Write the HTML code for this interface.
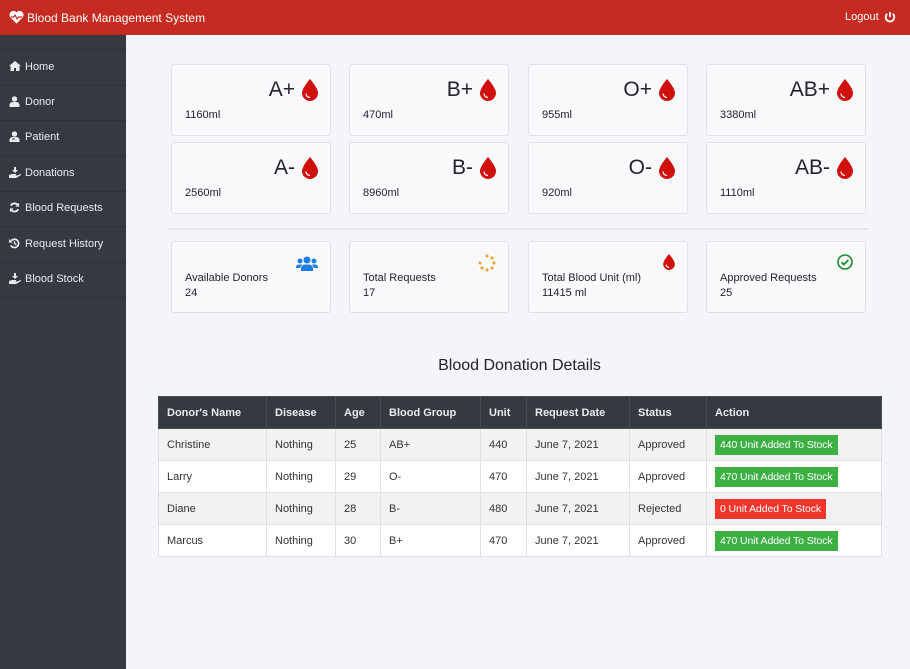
<!DOCTYPE html>
<html><head><style>
*{box-sizing:border-box;margin:0;padding:0}
body{width:910px;height:669px;overflow:hidden;background:#f4f5f8;font-family:"Liberation Sans",Arial,sans-serif;font-size:12px;color:#212529;position:relative}
.hdr{position:absolute;left:0;top:0;width:910px;height:35px;background:#c62b22;color:#fff}
.hdr .t{position:absolute;left:27px;top:11px;font-size:12px}
.hdr .lo{position:absolute;left:845px;top:11px;font-size:11px}
.side{position:absolute;left:0;top:35px;width:126px;height:634px;background:#343a40}
.side .sep{position:absolute;left:0;width:126px;height:1px;background:#2d3237}
.side .it{position:absolute;left:25px;color:#e9ecef;font-size:11px}
.side svg{position:absolute;left:9px}
.card{position:absolute;width:160px;height:72px;background:#f8f9fa;border:1px solid #dfe1e4;border-radius:3px}
.card .g{position:absolute;right:35px;top:13px;font-size:21px;color:#212529}
.card .drop{position:absolute;right:12px;top:14px}
.card .v{position:absolute;left:13px;top:44px;font-size:11px}
.card .l{position:absolute;left:13px;top:29px;font-size:11px;line-height:15px}
.card .ic{position:absolute;right:12px;top:12px}
.hr{position:absolute;left:167px;top:228px;width:702px;height:2px;background:#e6e7ea}
h3{position:absolute;left:158px;width:723px;top:357px;text-align:center;font-weight:normal;font-size:16px;color:#212529}
table{position:absolute;left:158px;top:396px;width:724px;border-collapse:collapse;font-size:11px}
th{background:#343a40;color:#e9ecef;text-align:left;height:32px;padding-left:8px;font-weight:bold;border:1px solid #454d55}
td{height:32px;padding-left:8px;border:1px solid #dee2e6;color:#333}
tr:nth-child(even) td{background:#f2f2f2}
tr:nth-child(odd) td{background:#fff}
.b{display:inline-block;color:#fff;padding:4px 5px;font-size:10.5px;background:#3cb043;letter-spacing:-0.1px}
.b.r{background:#f1352b}
</style></head><body>
<div class="hdr">
<svg style="position:absolute;left:9px;top:10px" width="15" height="14" viewBox="0 0 16 14"><path d="M8 14L1.5 7.5A4 4 0 0 1 8 2a4 4 0 0 1 6.5 5.5z" fill="#fff"/><path d="M2 7h3l1.5-2 2 4 1.5-2h4" stroke="#c62b22" stroke-width="1.3" fill="none"/></svg>
<span class="t">Blood Bank Management System</span>
<span class="lo">Logout</span>
<svg style="position:absolute;left:884px;top:11px" width="12" height="12" viewBox="0 0 12 12"><path d="M3.3 2.8A4.3 4.3 0 1 0 8.7 2.8" stroke="#fff" stroke-width="1.8" fill="none"/><path d="M6 1v5" stroke="#fff" stroke-width="1.8"/></svg>
</div>
<div class="side">
<div class="sep" style="top:14px"></div>
<svg style="top:26px" width="12" height="10" viewBox="0 0 12 10"><path d="M6 0L0 5h1.5v5h3.5V7h2v3h3.5V5H12z" fill="#e9ecef"/></svg><span class="it" style="top:26px">Home</span>
<div class="sep" style="top:50px"></div>
<svg style="top:61px" width="11" height="11" viewBox="0 0 11 11"><circle cx="5.5" cy="3" r="2.7" fill="#e9ecef"/><path d="M0.5 11v-2a3 3 0 0 1 3-3h4a3 3 0 0 1 3 3v2z" fill="#e9ecef"/></svg><span class="it" style="top:61px">Donor</span>
<div class="sep" style="top:85px"></div>
<svg style="top:96px" width="11" height="11" viewBox="0 0 11 11"><circle cx="5.5" cy="3" r="2.7" fill="#e9ecef"/><path d="M0.5 11v-2a3 3 0 0 1 3-3h4a3 3 0 0 1 3 3v2z" fill="#e9ecef"/><path d="M3 8h3" stroke="#343a40"/></svg><span class="it" style="top:96px">Patient</span>
<div class="sep" style="top:121px"></div>
<svg style="top:132px" width="12" height="11" viewBox="0 0 12 11"><path d="M5 0h2v3h2L6 6 3 3h2z" fill="#e9ecef"/><path d="M0 8l3-1h4v1.3H4.5M0 8v3h7l5-3v-1l-4 1.5" fill="#e9ecef"/></svg><span class="it" style="top:132px">Donations</span>
<div class="sep" style="top:156px"></div>
<svg style="top:167px" width="11" height="11" viewBox="0 0 12 12"><path d="M10 4A4.5 4.5 0 0 0 2 4M2 8a4.5 4.5 0 0 0 8 0" stroke="#e9ecef" stroke-width="2" fill="none"/><path d="M11 1v4H7zM1 11V7h4z" fill="#e9ecef"/></svg><span class="it" style="top:167px">Blood Requests</span>
<div class="sep" style="top:191px"></div>
<svg style="top:203px" width="11" height="11" viewBox="0 0 12 12"><path d="M2.5 3A4.5 4.5 0 1 1 2 8" stroke="#e9ecef" stroke-width="1.8" fill="none"/><path d="M0 1v4h4z" fill="#e9ecef"/><path d="M6 3.5V6l2 1.5" stroke="#e9ecef" stroke-width="1.5" fill="none"/></svg><span class="it" style="top:203px">Request History</span>
<div class="sep" style="top:227px"></div>
<svg style="top:238px" width="12" height="11" viewBox="0 0 12 11"><path d="M5 0h2v3h2L6 6 3 3h2z" fill="#e9ecef"/><path d="M0 8l3-1h4v1.3H4.5M0 8v3h7l5-3v-1l-4 1.5" fill="#e9ecef"/></svg><span class="it" style="top:238px">Blood Stock</span>
<div class="sep" style="top:262px"></div>
</div>

<div class="card" style="left:171px;top:64px"><span class="g">A+</span><svg class="drop" width="16" height="22" viewBox="0 0 16 22"><path d="M8 0C8 0 0 9 0 14a8 8 0 0 0 16 0C16 9 8 0 8 0z" fill="#d0100c"/><path d="M4 14.5a4 4 0 0 0 4 4" stroke="#fff" stroke-width="1.2" fill="none"/></svg><span class="v">1160ml</span></div>
<div class="card" style="left:349px;top:64px"><span class="g">B+</span><svg class="drop" width="16" height="22" viewBox="0 0 16 22"><path d="M8 0C8 0 0 9 0 14a8 8 0 0 0 16 0C16 9 8 0 8 0z" fill="#d0100c"/><path d="M4 14.5a4 4 0 0 0 4 4" stroke="#fff" stroke-width="1.2" fill="none"/></svg><span class="v">470ml</span></div>
<div class="card" style="left:528px;top:64px"><span class="g">O+</span><svg class="drop" width="16" height="22" viewBox="0 0 16 22"><path d="M8 0C8 0 0 9 0 14a8 8 0 0 0 16 0C16 9 8 0 8 0z" fill="#d0100c"/><path d="M4 14.5a4 4 0 0 0 4 4" stroke="#fff" stroke-width="1.2" fill="none"/></svg><span class="v">955ml</span></div>
<div class="card" style="left:706px;top:64px"><span class="g">AB+</span><svg class="drop" width="16" height="22" viewBox="0 0 16 22"><path d="M8 0C8 0 0 9 0 14a8 8 0 0 0 16 0C16 9 8 0 8 0z" fill="#d0100c"/><path d="M4 14.5a4 4 0 0 0 4 4" stroke="#fff" stroke-width="1.2" fill="none"/></svg><span class="v">3380ml</span></div>

<div class="card" style="left:171px;top:142px"><span class="g">A-</span><svg class="drop" width="16" height="22" viewBox="0 0 16 22"><path d="M8 0C8 0 0 9 0 14a8 8 0 0 0 16 0C16 9 8 0 8 0z" fill="#d0100c"/><path d="M4 14.5a4 4 0 0 0 4 4" stroke="#fff" stroke-width="1.2" fill="none"/></svg><span class="v">2560ml</span></div>
<div class="card" style="left:349px;top:142px"><span class="g">B-</span><svg class="drop" width="16" height="22" viewBox="0 0 16 22"><path d="M8 0C8 0 0 9 0 14a8 8 0 0 0 16 0C16 9 8 0 8 0z" fill="#d0100c"/><path d="M4 14.5a4 4 0 0 0 4 4" stroke="#fff" stroke-width="1.2" fill="none"/></svg><span class="v">8960ml</span></div>
<div class="card" style="left:528px;top:142px"><span class="g">O-</span><svg class="drop" width="16" height="22" viewBox="0 0 16 22"><path d="M8 0C8 0 0 9 0 14a8 8 0 0 0 16 0C16 9 8 0 8 0z" fill="#d0100c"/><path d="M4 14.5a4 4 0 0 0 4 4" stroke="#fff" stroke-width="1.2" fill="none"/></svg><span class="v">920ml</span></div>
<div class="card" style="left:706px;top:142px"><span class="g">AB-</span><svg class="drop" width="16" height="22" viewBox="0 0 16 22"><path d="M8 0C8 0 0 9 0 14a8 8 0 0 0 16 0C16 9 8 0 8 0z" fill="#d0100c"/><path d="M4 14.5a4 4 0 0 0 4 4" stroke="#fff" stroke-width="1.2" fill="none"/></svg><span class="v">1110ml</span></div>

<div class="hr"></div>

<div class="card" style="left:171px;top:241px"><svg class="ic" style="right:12px;top:14px" width="22" height="15" viewBox="0 0 22 15"><circle cx="11" cy="4" r="3.5" fill="#1e7ee0"/><circle cx="4" cy="5" r="2.5" fill="#1e7ee0"/><circle cx="18" cy="5" r="2.5" fill="#1e7ee0"/><path d="M5 15v-2a4 4 0 0 1 4-4.5h4a4 4 0 0 1 4 4.5v2z" fill="#1e7ee0"/><path d="M0 12a3 3 0 0 1 3-3.5h3L4 12z M22 12a3 3 0 0 0-3-3.5h-3l2 3.5z" fill="#1e7ee0"/></svg><span class="l" style="top:29px">Available Donors<br>24</span></div>
<div class="card" style="left:349px;top:241px"><svg class="ic" width="18" height="18" viewBox="0 0 18 18" fill="#f0a020"><circle cx="9" cy="2" r="1.5"/><circle cx="14" cy="4" r="1.5"/><circle cx="16" cy="9" r="1.5"/><circle cx="14" cy="14" r="1.5"/><circle cx="9" cy="16" r="1.5"/><circle cx="4" cy="14" r="1.5"/><circle cx="2" cy="9" r="1.5"/></svg><span class="l">Total Requests<br>17</span></div>
<div class="card" style="left:528px;top:241px"><svg class="ic" width="12" height="16" viewBox="0 0 16 22"><path d="M8 0C8 0 0 9 0 14a8 8 0 0 0 16 0C16 9 8 0 8 0z" fill="#d0100c"/><path d="M4 14.5a4 4 0 0 0 4 4" stroke="#fff" stroke-width="1.5" fill="none"/></svg><span class="l">Total Blood Unit (ml)<br>11415 ml</span></div>
<div class="card" style="left:706px;top:241px"><svg class="ic" width="16" height="16" viewBox="0 0 16 16"><circle cx="8" cy="8" r="7" stroke="#1a8a2a" stroke-width="1.6" fill="none"/><path d="M4.5 8.2l2.3 2.3 4.5-4.5" stroke="#1a8a2a" stroke-width="1.8" fill="none"/></svg><span class="l">Approved Requests<br>25</span></div>

<h3>Blood Donation Details</h3>
<table>
<tr><th style="width:108px">Donor's Name</th><th style="width:69px">Disease</th><th style="width:45px">Age</th><th style="width:100px">Blood Group</th><th style="width:46px">Unit</th><th style="width:103px">Request Date</th><th style="width:77px">Status</th><th>Action</th></tr>
<tr><td>Christine</td><td>Nothing</td><td>25</td><td>AB+</td><td>440</td><td>June 7, 2021</td><td>Approved</td><td><span class="b">440 Unit Added To Stock</span></td></tr>
<tr><td>Larry</td><td>Nothing</td><td>29</td><td>O-</td><td>470</td><td>June 7, 2021</td><td>Approved</td><td><span class="b">470 Unit Added To Stock</span></td></tr>
<tr><td>Diane</td><td>Nothing</td><td>28</td><td>B-</td><td>480</td><td>June 7, 2021</td><td>Rejected</td><td><span class="b r">0 Unit Added To Stock</span></td></tr>
<tr><td>Marcus</td><td>Nothing</td><td>30</td><td>B+</td><td>470</td><td>June 7, 2021</td><td>Approved</td><td><span class="b">470 Unit Added To Stock</span></td></tr>
</table>
</body></html>
